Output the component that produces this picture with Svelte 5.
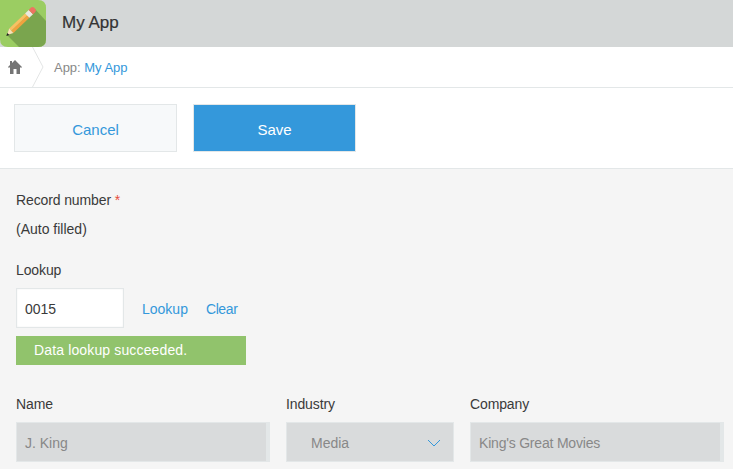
<script>
  const fields = [
    { label: 'Name', value: 'J. King', cls: 'name' },
    { label: 'Industry', value: 'Media', cls: 'industry', select: true },
    { label: 'Company', value: "King's Great Movies", cls: 'company' }
  ];
</script>

<div class="page">
  <header class="appbar">
    <div class="appicon">
      <svg viewBox="0 0 46 47" width="46" height="47">
        <path d="M0 0H38Q46 0 46 8V39Q46 47 38 47H8Q0 47 0 39Z" fill="#9bcd62"/>
        <path d="M7 35L35 9L46 21V39Q46 47 38 47H19Z" fill="#7aa54e"/>
        <path d="M9.2 28.600L25.100 13.400L27.200 15.600L11.300 30.800Z" fill="#f8c063"/>
        <path d="M11.300 30.800L27.200 15.600L29.300 17.800L13.400 33Z" fill="#f0a23f"/>
        <path d="M9.2 28.600L13.400 33L7 35Z" fill="#f9e0b8"/>
        <path d="M6.300 36L7.300 33L9.300 34.900Z" fill="#222"/>
        <path d="M25.100 13.400L28.700 9.900L33 14.300L29.300 17.800Z" fill="#ece9e0"/>
        <path d="M28.700 9.900L31 7.600Q32.500 6.300 34 7.600L35.400 9Q36.600 10.500 35.300 12L33 14.300Z" fill="#ee7361"/>
      </svg>
    </div>
    <h1>My App</h1>
  </header>

  <nav class="crumbs">
    <div class="home">
      <svg viewBox="0 0 14 14" width="14" height="14">
        <path d="M7 0L14 7V7.600H12V14H8.500V9H5.500V14H2V7.600H0V7L2 5V1H4V3Z" fill="#757575"/>
      </svg>
    </div>
    <svg class="chevron" viewBox="0 0 12 40" width="12" height="40">
      <path d="M.5 0L11 20L.5 40" fill="none" stroke="#e3e5e5"/>
    </svg>
    <span class="crumb">App: <a href="#top">My App</a></span>
  </nav>

  <div class="toolbar">
    <button class="btn cancel">Cancel</button>
    <button class="btn save">Save</button>
  </div>

  <main class="form">
    <div class="label first">Record number <span class="req">*</span></div>
    <div class="auto">(Auto filled)</div>

    <div class="label lookup-label">Lookup</div>
    <div class="lookup-row">
      <div class="input">0015</div>
      <a class="link" href="#top">Lookup</a>
      <a class="link clear" href="#top">Clear</a>
    </div>
    <div class="notice">Data lookup succeeded.</div>

    <div class="fields">
      {#each fields as f}
        <div class="field {f.cls}">
          <div class="label">{f.label}</div>
          <div class="disabled">
            <span>{f.value}</span>
            {#if f.select}
              <svg viewBox="0 0 14 8" width="14" height="8">
                <path d="M1 1L7 7L13 1" fill="none" stroke="#3498db" stroke-width="1"/>
              </svg>
            {/if}
          </div>
        </div>
      {/each}
    </div>
  </main>
</div>

<style>
  :global(body) {
    margin: 0;
    background: #f5f5f5;
  }
  .page {
    width: 733px;
    height: 469px;
    overflow: hidden;
    font-family: "Liberation Sans", Arial, sans-serif;
    font-size: 14px;
    color: #3a3a3a;
    background: #f5f5f5;
  }
  .appbar {
    display: flex;
    align-items: center;
    height: 47px;
    background: #d4d7d7;
  }
  .appicon {
    width: 46px;
    height: 47px;
  }
  .appicon svg,
  .home svg,
  .chevron {
    display: block;
  }
  h1 {
    margin: 0 0 2px 16px;
    font-size: 17px;
    font-weight: 400;
    color: #333;
    -webkit-text-stroke: 0.2px #333;
  }
  .crumbs {
    display: flex;
    align-items: center;
    height: 40px;
    background: #fff;
    border-bottom: 1px solid #e3e7e8;
  }
  .home {
    width: 32px;
    display: flex;
    justify-content: flex-start;
    padding-left: 8px;
    box-sizing: border-box;
  }
  .crumb {
    margin-left: 10px;
    font-size: 13px;
    color: #888;
    letter-spacing: -0.02px;
  }
  .crumb a,
  .link {
    color: #3498db;
    text-decoration: none;
  }
  .toolbar {
    display: flex;
    gap: 16px;
    height: 81px;
    padding: 16px 14px 0;
    box-sizing: border-box;
    background: #fff;
    border-bottom: 1px solid #e3e7e8;
  }
  .btn {
    width: 163px;
    height: 48px;
    padding: 2px 0 0;
    font: inherit;
    font-size: 15px;
    box-sizing: border-box;
  }
  .cancel {
    background: #f7f9fa;
    border: 1px solid #e3e7e8;
    color: #3498db;
  }
  .save {
    background: #3498db;
    border: 1px solid #e3e7e8;
    color: #fff;
  }
  .form {
    padding: 0 16px;
  }
  .label {
    line-height: 18px;
    letter-spacing: -0.12px;
  }
  .first {
    padding-top: 22px;
  }
  .req {
    color: #e74c3c;
  }
  .auto {
    margin-top: 11px;
    line-height: 18px;
  }
  .lookup-label {
    margin-top: 23px;
  }
  .lookup-row {
    display: flex;
    align-items: center;
    margin-top: 9px;
    height: 40px;
  }
  .input {
    width: 108px;
    height: 40px;
    box-sizing: border-box;
    padding: 1px 0 0 8px;
    line-height: 38px;
    background: #fff;
    border: 1px solid #e3e7e8;
    box-shadow: inset 0 0 2px #eee;
    margin-right: 18px;
  }
  .link {
    margin-right: 18px;
    margin-top: 1px;
  }
  .clear {
    letter-spacing: -0.4px;
  }
  .notice {
    width: 230px;
    height: 29px;
    margin-top: 8px;
    padding-left: 18px;
    box-sizing: border-box;
    line-height: 29px;
    background: #91c36c;
    color: #fff;
    letter-spacing: 0.14px;
  }
  .fields {
    display: flex;
    margin-top: 30px;
  }
  .field {
    flex: none;
  }
  .name { width: 270px; }
  .industry { width: 184px; }
  .company { width: 254px; }
  .disabled {
    display: flex;
    align-items: center;
    justify-content: space-between;
    height: 40px;
    margin-top: 9px;
    box-sizing: border-box;
    background: #d9dbdc;
    border: 1px solid #e3e7e8;
    color: #888;
    padding: 2px 0 0 8px;
  }
  .name .disabled {
    width: 254px;
    border-right: 4px solid #e3e7e8;
  }
  .industry .disabled {
    width: 168px;
    padding: 2px 12px 0 24px;
  }
  .company .disabled {
    width: 254px;
    border-right: 4px solid #e3e7e8;
    letter-spacing: -0.2px;
  }
</style>
